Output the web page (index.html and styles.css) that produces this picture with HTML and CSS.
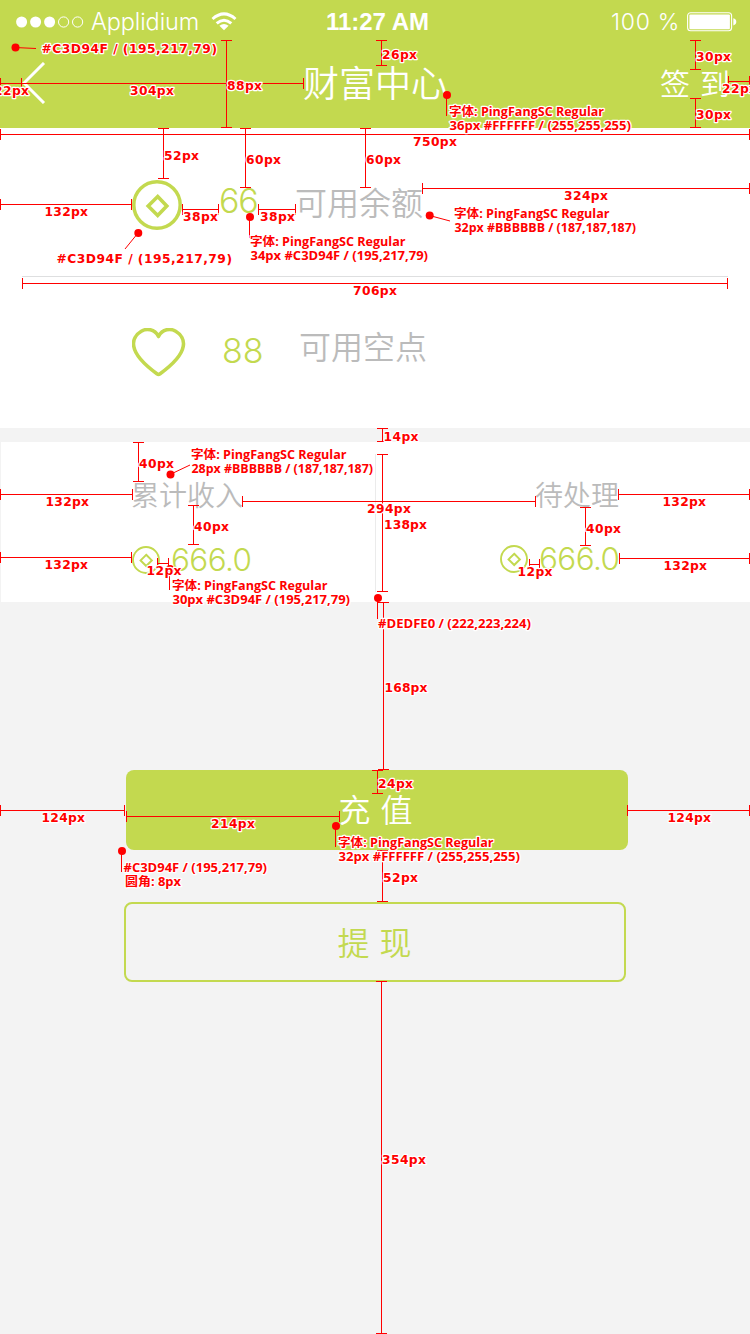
FILE: index.html
```html
<!DOCTYPE html>
<html lang="zh-CN">
<head>
<meta charset="utf-8">
<title>财富中心</title>
<link rel="stylesheet" href="styles.css">
</head>
<body>
<main class="screen">
  <header class="header">
    <div class="status">
      <div class="carrier">
        <svg class="signal" width="68" height="12" viewBox="0 0 68 12"><g fill="#fff"><circle cx="5.600" cy="6" r="5.500"/><circle cx="19.600" cy="6" r="5.500"/><circle cx="33.600" cy="6" r="5.500"/></g><g fill="none" stroke="#fff"><circle cx="47.600" cy="6" r="5.100"/><circle cx="61.600" cy="6" r="5.100"/></g></svg>
        <span class="carrier-name">Applidium</span>
        <svg class="wifi" width="26" height="20" viewBox="0 0 26 20" fill="none" stroke="#fff" stroke-width="3"><path d="M1.5 7Q13-3.2 24.5 7"/><path d="M5.7 11.4Q13 5 20.3 11.4"/><path d="M8.4 13.8Q13 10.2 17.6 13.8L13 18.2Z" fill="#fff" stroke="none"/></svg>
      </div>
      <time class="clock">11:27 AM</time>
      <div class="power">
        <span class="percent">100 %</span>
        <svg width="50" height="20" viewBox="0 0 50 20"><rect x=".6" y=".8" width="44" height="18" rx="3" fill="none" stroke="#fff" stroke-width="1.1"/><rect x="2.4" y="2.4" width="40.5" height="14.8" rx="1" fill="#fff"/><path d="M46.3 6.2Q49.3 7 49.3 9.8T46.3 13.4Z" fill="#fff"/></svg>
      </div>
    </div>
    <nav class="nav">
      <svg class="back" width="24" height="42" viewBox="0 0 24 42"><path d="M22 1L2 21L22 41" fill="none" stroke="#fff" stroke-width="3"/></svg>
      <h1 class="title">财富中心</h1>
      <div class="checkin"><span>签</span><span>到</span></div>
    </nav>
  </header>

  <section class="assets">
    <div class="asset balance">
      <svg class="coin" width="50" height="50" viewBox="0 0 50 50"><circle cx="25" cy="25" r="23.2" stroke-width="3.5"/><path d="M25.7 16.5L34.8 26L25.7 35.5L16.2 26Z" stroke-width="3.6"/></svg>
      <span class="amount">66</span>
      <span class="name">可用余额</span>
    </div>
    <div class="asset points">
      <svg class="heart" width="54" height="50" viewBox="0 0 54 50"><path d="M26.5 8.500C30.500 .8 38.5.2 43.7 3.2C49 6.3 52.5 12 51.2 18.500C49.5 28.500 36 40 27.8 46Q26.5 46.800 25.2 46C17 40 3.5 28.500 1.8 18.500C.5 12 4 6.3 9.3 3.2C14.5.2 22.500 .8 26.5 8.500Z" stroke-width="3.6" stroke-linejoin="round"/></svg>
      <span class="amount">88</span>
      <span class="name">可用空点</span>
    </div>
  </section>

  <section class="totals">
    <div class="total income">
      <span class="label">累计收入</span>
      <div class="value"><svg class="coin" width="28" height="28" viewBox="0 0 28 28"><circle cx="14" cy="14" r="13" stroke-width="1.9"/><path d="M14.2 8.8L19.8 14.4L14.2 20L8.6 14.4Z" stroke-width="2"/></svg><span>666.0</span></div>
    </div>
    <div class="rule"></div>
    <div class="total pending">
      <span class="label">待处理</span>
      <div class="value"><svg class="coin" width="28" height="28" viewBox="0 0 28 28"><circle cx="14" cy="14" r="13" stroke-width="1.9"/><path d="M14.2 8.8L19.8 14.4L14.2 20L8.6 14.4Z" stroke-width="2"/></svg><span>666.0</span></div>
    </div>
  </section>

  <section class="actions">
    <button class="button primary"><span>充</span><span>值</span></button>
    <button class="button outline"><span>提</span><span>现</span></button>
  </section>

  <svg class="notes" width="750" height="1334" viewBox="0 0 750 1334">
    <!-- vertical measurements -->
    <path class="measure" d="M226.5 40V128M221 40.500h11M221 127.500h11
      M381.500 40V66M376 40.500h11M376 65.500h11
      M695.500 40V70M690 40.500h11M690 69.500h11
      M695.500 98V128M690 98.500h11M690 127.500h11
      M163.500 128V179M158 128.500h11M158 178.500h11
      M245.500 128V188M240 128.500h11M240 187.500h11
      M365.500 128V188M360 128.500h11M360 187.500h11
      M382.500 428V442M377 428.500h11M377 441.500h11
      M382.500 454V592M377 454.500h11M377 591.500h11
      M138.500 442V482M133 442.500h11M133 481.500h11
      M193.500 505V545M188 505.500h11M188 544.500h11
      M585.500 507V546M580 507.500h11M580 545.500h11
      M383.500 602V770M378 602.500h11M378 769.500h11
      M377.500 770V794M372 770.500h11M372 793.500h11
      M382.500 850V902M377 850.500h11M377 901.500h11
      M381.500 981V1334M376 981.500h11M376 1333.500h11"/>
    <!-- horizontal measurements -->
    <path class="measure" d="M0 83.500H304M.5 78v11M21.500 78v11M303.500 78v11
      M728 81.500H750M728.500 76v11M749.500 76v11
      M0 134.500H750M.5 129v11M749.500 129v11
      M0 204.500H132M.5 199v11M131.500 199v11
      M182 209.500H219M182.500 204v11M218.500 204v11
      M258 209.500H296M258.500 204v11M295.500 204v11
      M422 188.500H750M422.500 183v11M749.500 183v11
      M22 283.500H728M22.500 278v11M727.500 278v11
      M0 494.500H133M.5 489v11M132.500 489v11
      M0 557.500H132M.5 552v11M131.500 552v11
      M242 501.500H536M242.500 496v11M535.500 496v11
      M618 494.500H750M618.500 489v11M749.500 489v11
      M619 558.500H750M619.500 553v11M749.500 553v11
      M157 563.500H169M157.500 558v11M168.500 558v11
      M529 564.500H540M529.500 559v11M539.500 559v11
      M0 810.500H125M.5 805v11M124.500 805v11
      M627 810.500H750M627.500 805v11M749.500 805v11
      M126 816.500H340M126.500 811v11M339.500 811v11"/>
    <!-- callout pins -->
    <path class="leader" d="M15 47.500L36 48.500M446.500 95V116M138 233L125 249M249.500 217V238M429.500 215.500L450 221M170 474.500L190 465M169.500 569V590M377.500 598V619M335.500 826V847M121.500 851V872"/>
    <g class="pin"><circle cx="15.500" cy="47.500" r="4"/><circle cx="447" cy="95" r="4"/><circle cx="138.300" cy="233" r="4"/><circle cx="250" cy="217" r="4"/><circle cx="429.700" cy="215.500" r="4"/><circle cx="170.500" cy="474.500" r="4"/><circle cx="170" cy="569" r="4"/><circle cx="378" cy="598" r="4"/><circle cx="336" cy="826" r="4"/><circle cx="122" cy="851" r="4"/></g>
    <g class="size">
      <text x="227" y="90" textLength="35">88px</text>
      <text x="382" y="59" textLength="35">26px</text>
      <text x="696" y="61" textLength="35">30px</text>
      <text x="696" y="119" textLength="35">30px</text>
      <text x="164" y="160" textLength="35">52px</text>
      <text x="246" y="164" textLength="35">60px</text>
      <text x="366" y="164" textLength="35">60px</text>
      <text x="383.500" y="441" textLength="35">14px</text>
      <text x="384" y="529" textLength="43">138px</text>
      <text x="139" y="468" textLength="35">40px</text>
      <text x="194" y="531" textLength="35">40px</text>
      <text x="586" y="533" textLength="35">40px</text>
      <text x="384.500" y="692" textLength="43">168px</text>
      <text x="378" y="788" textLength="35">24px</text>
      <text x="383" y="882" textLength="35">52px</text>
      <text x="382" y="1164" textLength="44">354px</text>
      <text x="-6" y="95" textLength="35">22px</text>
      <text x="130" y="95" textLength="44">304px</text>
      <text x="722" y="93" textLength="35">22px</text>
      <text x="413" y="146" textLength="44">750px</text>
      <text x="44.500" y="216" textLength="43.500">132px</text>
      <text x="183" y="221" textLength="35">38px</text>
      <text x="260" y="221" textLength="35">38px</text>
      <text x="564" y="200" textLength="44">324px</text>
      <text x="353" y="295" textLength="44">706px</text>
      <text x="45.500" y="506" textLength="43.500">132px</text>
      <text x="44.500" y="569" textLength="43.500">132px</text>
      <text x="367" y="513" textLength="44">294px</text>
      <text x="662.500" y="506" textLength="43.500">132px</text>
      <text x="663.500" y="570" textLength="43.500">132px</text>
      <text x="146.500" y="575" textLength="35">12px</text>
      <text x="517.500" y="576" textLength="35">12px</text>
      <text x="41.500" y="822" textLength="43.500">124px</text>
      <text x="667.500" y="822" textLength="43.500">124px</text>
      <text x="211" y="828" textLength="44">214px</text>
      <text x="41.500" y="53" textLength="175.500">#C3D94F / (195,217,79)</text>
      <text x="56.500" y="263" textLength="175.500">#C3D94F / (195,217,79)</text>
    </g>
    <g class="spec">
      <text x="449" y="116" textLength="155" lengthAdjust="spacingAndGlyphs">字体: PingFangSC Regular</text>
      <text x="449.500" y="130" textLength="181.500" lengthAdjust="spacingAndGlyphs">36px #FFFFFF / (255,255,255)</text>
      <text x="250" y="246" textLength="155.500" lengthAdjust="spacingAndGlyphs">字体: PingFangSC Regular</text>
      <text x="250.500" y="260" textLength="177.500" lengthAdjust="spacingAndGlyphs">34px #C3D94F / (195,217,79)</text>
      <text x="454" y="218" textLength="155.500" lengthAdjust="spacingAndGlyphs">字体: PingFangSC Regular</text>
      <text x="454.500" y="232" textLength="181.500" lengthAdjust="spacingAndGlyphs">32px #BBBBBB / (187,187,187)</text>
      <text x="191" y="459" textLength="155.500" lengthAdjust="spacingAndGlyphs">字体: PingFangSC Regular</text>
      <text x="191.500" y="473" textLength="181.500" lengthAdjust="spacingAndGlyphs">28px #BBBBBB / (187,187,187)</text>
      <text x="172" y="590" textLength="155.500" lengthAdjust="spacingAndGlyphs">字体: PingFangSC Regular</text>
      <text x="172.500" y="604" textLength="177.500" lengthAdjust="spacingAndGlyphs">30px #C3D94F / (195,217,79)</text>
      <text x="378" y="628" textLength="153" lengthAdjust="spacingAndGlyphs">#DEDFE0 / (222,223,224)</text>
      <text x="338" y="847" textLength="155.500" lengthAdjust="spacingAndGlyphs">字体: PingFangSC Regular</text>
      <text x="338.500" y="861" textLength="181.500" lengthAdjust="spacingAndGlyphs">32px #FFFFFF / (255,255,255)</text>
      <text x="123.500" y="872" textLength="143.500" lengthAdjust="spacingAndGlyphs">#C3D94F / (195,217,79)</text>
      <text x="125" y="886" textLength="56" lengthAdjust="spacingAndGlyphs">圆角: 8px</text>
    </g>
  </svg>
</main>
</body>
</html>
```

FILE: styles.css
```css
* { box-sizing: border-box; }
body { margin: 0; background: #f3f3f3; }
.screen {
  position: relative;
  width: 750px;
  height: 1334px;
  overflow: hidden;
  font-family: "Noto Sans CJK SC", sans-serif;
  font-weight: 350;
}
svg { display: block; flex: none; }

.header { height: 128px; background: #c3d94f; color: #fff; }
.status {
  display: grid;
  grid-template-columns: 1fr auto 1fr;
  align-items: center;
  height: 40px;
  padding: 2px 13px 0 16px;
  font-family: Inter, "Liberation Sans", sans-serif;
}
.carrier, .power { display: flex; align-items: center; }
.carrier-name { margin-left: 7px; font-size: 23.5px; line-height: 40px; letter-spacing: -.1px; width: 107px; white-space: nowrap; }
.wifi { margin-left: 13px; margin-top: -1px; }
.clock { padding-left: 2px; font: bold 24px/40px "Liberation Sans", sans-serif; }
.power { justify-content: flex-end; gap: 7px; font-size: 23px; }
.percent { letter-spacing: .7px; }
.nav {
  display: grid;
  grid-template-columns: 1fr auto 1fr;
  align-items: center;
  height: 88px;
  padding: 0 20px 2px 22px;
}
.title { margin: 0 2px 5px 0; font-size: 36px; line-height: 60px; font-weight: 350; }
.checkin { display: flex; justify-content: flex-end; gap: 10px; margin-bottom: 2px; font-size: 30px; line-height: 60px; }

.assets { height: 300px; background: #fff; }
.asset { display: flex; align-items: flex-start; margin: 0 22px; padding-left: 110px; }
.balance { height: 149px; border-bottom: 1px solid #dedfe0; padding-top: 52px; }
.points { padding-top: 51px; }
.coin, .heart { fill: none; stroke: #c3d94f; }
.amount { color: #c3d94f; font-family: Inter, "Liberation Sans", sans-serif; font-weight: 300; font-size: 34px; line-height: 40px; }
.name { color: #bbb; font-size: 32px; line-height: 48px; white-space: nowrap; }
.balance .amount { width: 38px; margin: 1px 0 0 37px; letter-spacing: -1.2px; }
.balance .name { margin: -3px 0 0 38px; }
.points .amount { width: 42px; margin: 3px 0 0 36px; }
.points .name { margin: -7px 0 0 35px; }

.totals {
  display: flex;
  height: 160px;
  margin: 14px 0 0 1px;
  background: #fff;
}
.total { display: flex; flex-direction: column; padding-top: 31px; }
.income { width: 374px; padding-left: 130px; align-items: flex-start; }
.rule { width: 1px; height: 138px; margin-top: 12px; background: #ebebeb; }
.pending { flex: 1; align-items: flex-end; padding-right: 131px; }
.label { color: #bbb; font-size: 28px; line-height: 42px; }
.value {
  display: flex;
  align-items: center;
  gap: 11px;
  margin-top: 24px;
  color: #c3d94f;
  font: 300 31.5px/40px Inter, "Liberation Sans", sans-serif;
}
.income .value { margin: 25px 0 0 1px; }
.value span { width: 80px; letter-spacing: -.6px; white-space: nowrap; }

.actions { display: flex; flex-direction: column; gap: 52px; padding: 168px 0 0 124px; }
.button {
  display: flex;
  justify-content: center;
  align-items: center;
  gap: 10px;
  width: 502px;
  height: 80px;
  padding: 0 3px 4px 0;
  border: 0;
  border-radius: 8px;
  font: 350 32px/48px "Noto Sans CJK SC", sans-serif;
}
.primary { margin-left: 2px; background: #c3d94f; color: #fff; }
.outline { padding: 0 1px 2px 0; border: 2px solid #c3d94f; background: transparent; color: #c3d94f; }

.notes { position: absolute; inset: 0; }
.measure { fill: none; stroke: #f00; shape-rendering: crispEdges; }
.leader { fill: none; stroke: #f00; stroke-width: 1; }
.pin { fill: #f00; }
.size, .spec { fill: #f00; stroke: #fff; stroke-width: 2.4px; stroke-linejoin: round; paint-order: stroke; }
.size { font: bold 12.3px "DejaVu Sans", sans-serif; }
.spec { font: bold 12px "Open Sans", "Noto Sans CJK SC", sans-serif; }
```
